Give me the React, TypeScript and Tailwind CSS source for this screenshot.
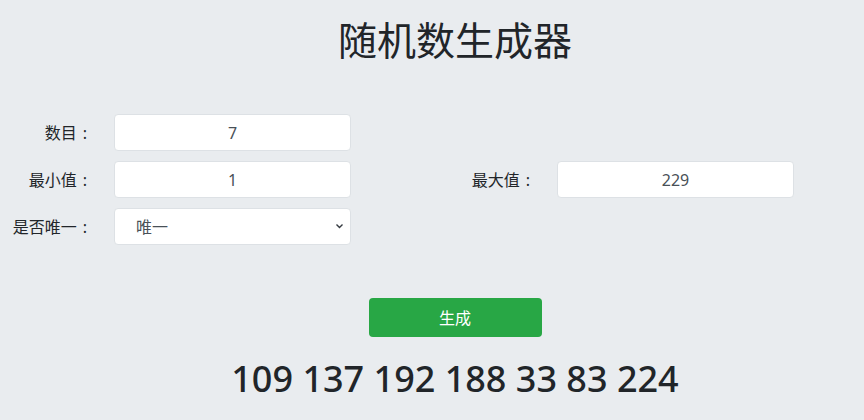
import React from "react";

const font = { fontFamily: '"Noto Sans", "Noto Sans CJK SC", sans-serif' };

function Label({ text }: { text: string }) {
  return (
    <div className="w-[100px] pr-[13px] text-right text-[16px] text-[#212529]">
      {text}
      <span className="ml-[6px]">:</span>
    </div>
  );
}

function Field({ value }: { value: string }) {
  return (
    <input
      readOnly
      value={value}
      className="w-[237px] h-[37px] rounded-[4px] border border-[#dde1e5] bg-white text-center text-[16px] text-[#495057] outline-none"
      style={font}
    />
  );
}

export default function App() {
  return (
    <div className="w-[864px] h-[420px] bg-[#e9ecef] overflow-hidden" style={font}>
      <div className="pl-[46px] pt-[14px] text-center">
        <h1 className="text-[39px] leading-[52px] text-[#212529] font-normal">随机数生成器</h1>
      </div>
      <div className="mt-[48px] flex flex-col gap-[10px]">
        <div className="flex items-center">
          <div className="flex items-center gap-[14px] w-[443px]">
            <Label text="数目" />
            <Field value="7" />
          </div>
        </div>
        <div className="flex items-center">
          <div className="flex items-center gap-[14px] w-[443px]">
            <Label text="最小值" />
            <Field value="1" />
          </div>
          <div className="flex items-center gap-[14px]">
            <Label text="最大值" />
            <Field value="229" />
          </div>
        </div>
        <div className="flex items-center">
          <div className="flex items-center gap-[14px] w-[443px]">
            <Label text="是否唯一" />
            <div className="relative w-[237px] h-[37px] rounded-[4px] border border-[#dde1e5] bg-white flex items-center pl-[21px] text-[16px] text-[#495057]">
              唯一
              <svg className="absolute right-[6px] top-[14px]" width="9" height="7" viewBox="0 0 9 7">
                <path d="M1.5 1.5 L4.5 4.5 L7.5 1.5" fill="none" stroke="#343a40" strokeWidth="1.4" />
              </svg>
            </div>
          </div>
        </div>
      </div>
      <div className="pl-[46px] mt-[53px] flex flex-col items-center">
        <button className="w-[173px] h-[39px] rounded-[4px] bg-[#28a745] text-white text-[16px]" style={font}>
          生成
        </button>
        <div className="mt-[18px] text-[36px] leading-[48px] font-medium text-[#212529]">
          109 137 192 188 33 83 224
        </div>
      </div>
    </div>
  );
}
